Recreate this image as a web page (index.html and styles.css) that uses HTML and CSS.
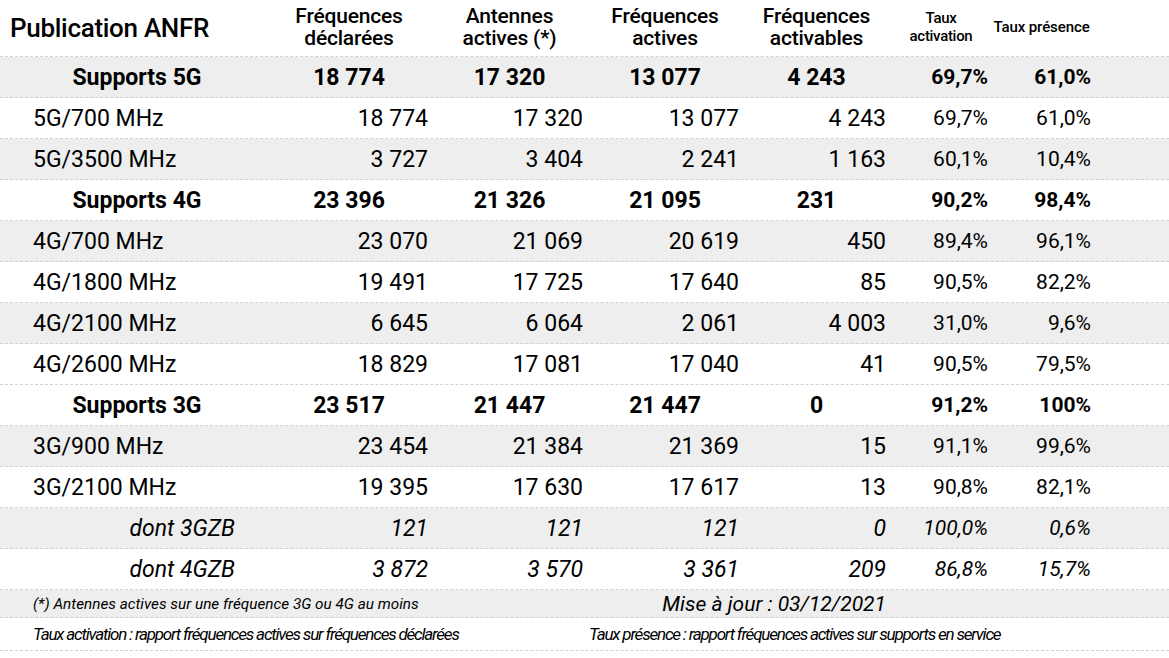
FILE: index.html
```html
<!DOCTYPE html>
<html lang="fr">
<head>
<meta charset="utf-8">
<title>Publication ANFR</title>
<link rel="stylesheet" href="styles.css">
</head>
<body>
<div class="sheet">
  <div class="row head">
    <div class="cell title">Publication ANFR</div>
    <div class="cell hc">Fréquences<br>déclarées</div>
    <div class="cell hc">Antennes<br>actives (*)</div>
    <div class="cell hc">Fréquences<br>actives</div>
    <div class="cell hc">Fréquences<br>activables</div>
    <div class="cell hc small">Taux<br>activation</div>
    <div class="cell hc small pres">Taux présence</div>
    <div class="cell"></div>
  </div>

  <div class="row grey sup">
    <div class="cell lab">Supports 5G</div>
    <div class="cell n">18 774</div><div class="cell n">17 320</div><div class="cell n">13 077</div><div class="cell n">4 243</div>
    <div class="cell p">69,7%</div><div class="cell p">61,0%</div><div class="cell"></div>
  </div>
  <div class="row">
    <div class="cell lab">5G/700 MHz</div>
    <div class="cell n">18 774</div><div class="cell n">17 320</div><div class="cell n">13 077</div><div class="cell n">4 243</div>
    <div class="cell p">69,7%</div><div class="cell p">61,0%</div><div class="cell"></div>
  </div>
  <div class="row grey">
    <div class="cell lab">5G/3500 MHz</div>
    <div class="cell n">3 727</div><div class="cell n">3 404</div><div class="cell n">2 241</div><div class="cell n">1 163</div>
    <div class="cell p">60,1%</div><div class="cell p">10,4%</div><div class="cell"></div>
  </div>

  <div class="row sup">
    <div class="cell lab">Supports 4G</div>
    <div class="cell n">23 396</div><div class="cell n">21 326</div><div class="cell n">21 095</div><div class="cell n">231</div>
    <div class="cell p">90,2%</div><div class="cell p">98,4%</div><div class="cell"></div>
  </div>
  <div class="row grey">
    <div class="cell lab">4G/700 MHz</div>
    <div class="cell n">23 070</div><div class="cell n">21 069</div><div class="cell n">20 619</div><div class="cell n">450</div>
    <div class="cell p">89,4%</div><div class="cell p">96,1%</div><div class="cell"></div>
  </div>
  <div class="row">
    <div class="cell lab">4G/1800 MHz</div>
    <div class="cell n">19 491</div><div class="cell n">17 725</div><div class="cell n">17 640</div><div class="cell n">85</div>
    <div class="cell p">90,5%</div><div class="cell p">82,2%</div><div class="cell"></div>
  </div>
  <div class="row grey">
    <div class="cell lab">4G/2100 MHz</div>
    <div class="cell n">6 645</div><div class="cell n">6 064</div><div class="cell n">2 061</div><div class="cell n">4 003</div>
    <div class="cell p">31,0%</div><div class="cell p">9,6%</div><div class="cell"></div>
  </div>
  <div class="row">
    <div class="cell lab">4G/2600 MHz</div>
    <div class="cell n">18 829</div><div class="cell n">17 081</div><div class="cell n">17 040</div><div class="cell n">41</div>
    <div class="cell p">90,5%</div><div class="cell p">79,5%</div><div class="cell"></div>
  </div>

  <div class="row sup">
    <div class="cell lab">Supports 3G</div>
    <div class="cell n">23 517</div><div class="cell n">21 447</div><div class="cell n">21 447</div><div class="cell n">0</div>
    <div class="cell p">91,2%</div><div class="cell p">100%</div><div class="cell"></div>
  </div>
  <div class="row grey">
    <div class="cell lab">3G/900 MHz</div>
    <div class="cell n">23 454</div><div class="cell n">21 384</div><div class="cell n">21 369</div><div class="cell n">15</div>
    <div class="cell p">91,1%</div><div class="cell p">99,6%</div><div class="cell"></div>
  </div>
  <div class="row">
    <div class="cell lab">3G/2100 MHz</div>
    <div class="cell n">19 395</div><div class="cell n">17 630</div><div class="cell n">17 617</div><div class="cell n">13</div>
    <div class="cell p">90,8%</div><div class="cell p">82,1%</div><div class="cell"></div>
  </div>

  <div class="row grey dont">
    <div class="cell lab">dont 3GZB</div>
    <div class="cell n">121</div><div class="cell n">121</div><div class="cell n">121</div><div class="cell n">0</div>
    <div class="cell p">100,0%</div><div class="cell p">0,6%</div><div class="cell"></div>
  </div>
  <div class="row dont">
    <div class="cell lab">dont 4GZB</div>
    <div class="cell n">3 872</div><div class="cell n">3 570</div><div class="cell n">3 361</div><div class="cell n">209</div>
    <div class="cell p">86,8%</div><div class="cell p">15,7%</div><div class="cell"></div>
  </div>

  <div class="row grey foot1">
    <div class="cell note">(*) Antennes actives sur une fréquence 3G ou 4G au moins</div>
    <div class="cell maj">Mise à jour : 03/12/2021</div>
    <div class="cell rest"></div>
  </div>
  <div class="row foot2">
    <div class="cell def">Taux activation : rapport fréquences actives sur fréquences déclarées</div>
    <div class="cell def def2">Taux présence : rapport fréquences actives sur supports en service</div>
  </div>
</div>
</body>
</html>
```
FILE: styles.css
```css
html, body {
  margin: 0;
  padding: 0;
  background: #ffffff;
}
body {
  font-family: Roboto, "Liberation Sans", sans-serif;
  color: #000;
}
.sheet {
  width: 1169px;
}
.row {
  display: grid;
  grid-template-columns: 266px 166px 155px 156px 147px 102px 103px 1fr;
  height: 40px;
  border-bottom: 1px dashed #d2d2d2;
  align-items: center;
  font-size: 23px;
}
.row.grey {
  background: #eeeeee;
}
.cell {
  white-space: nowrap;
}
.head {
  height: 56px;
  font-weight: 500;
}
.title {
  font-size: 26px;
  padding-left: 10px;
  letter-spacing: -0.3px;
}
.hc {
  text-align: center;
  font-size: 21px;
  line-height: 22px;
  letter-spacing: -0.2px;
  padding-bottom: 2px;
}
.hc.small {
  font-size: 15px;
  line-height: 18px;
  letter-spacing: -0.3px;
}
.hc.pres {
  letter-spacing: -0.1px;
  padding-right: 4px;
}
.lab {
  padding-left: 33px;
}
.n {
  text-align: right;
  padding-right: 4px;
}
.p {
  text-align: right;
  padding-right: 4px;
  font-size: 21px;
}
.sup {
  font-weight: 700;
}
.sup .lab {
  padding-left: 8px;
  text-align: center;
}
.sup .n {
  text-align: center;
  padding-right: 0;
}
.dont {
  font-style: italic;
}
.dont .lab {
  text-align: right;
  padding-left: 0;
  padding-right: 31px;
}
.foot1 {
  height: 27px;
}
.note {
  grid-column: 1 / 4;
  font-size: 15.3px;
  font-style: italic;
  padding-left: 33px;
}
.maj {
  grid-column: 4 / 6;
  font-size: 21px;
  font-style: italic;
  text-align: right;
  padding-right: 4px;
}
.rest {
  grid-column: 6 / 9;
}
.foot2 {
  height: 32px;
}
.def {
  grid-column: 1 / 4;
  font-size: 17px;
  font-style: italic;
  letter-spacing: -1.2px;
  word-spacing: 0;
  padding-left: 33px;
}
.def2 {
  grid-column: 4 / 9;
  padding-left: 2px;
}
```
